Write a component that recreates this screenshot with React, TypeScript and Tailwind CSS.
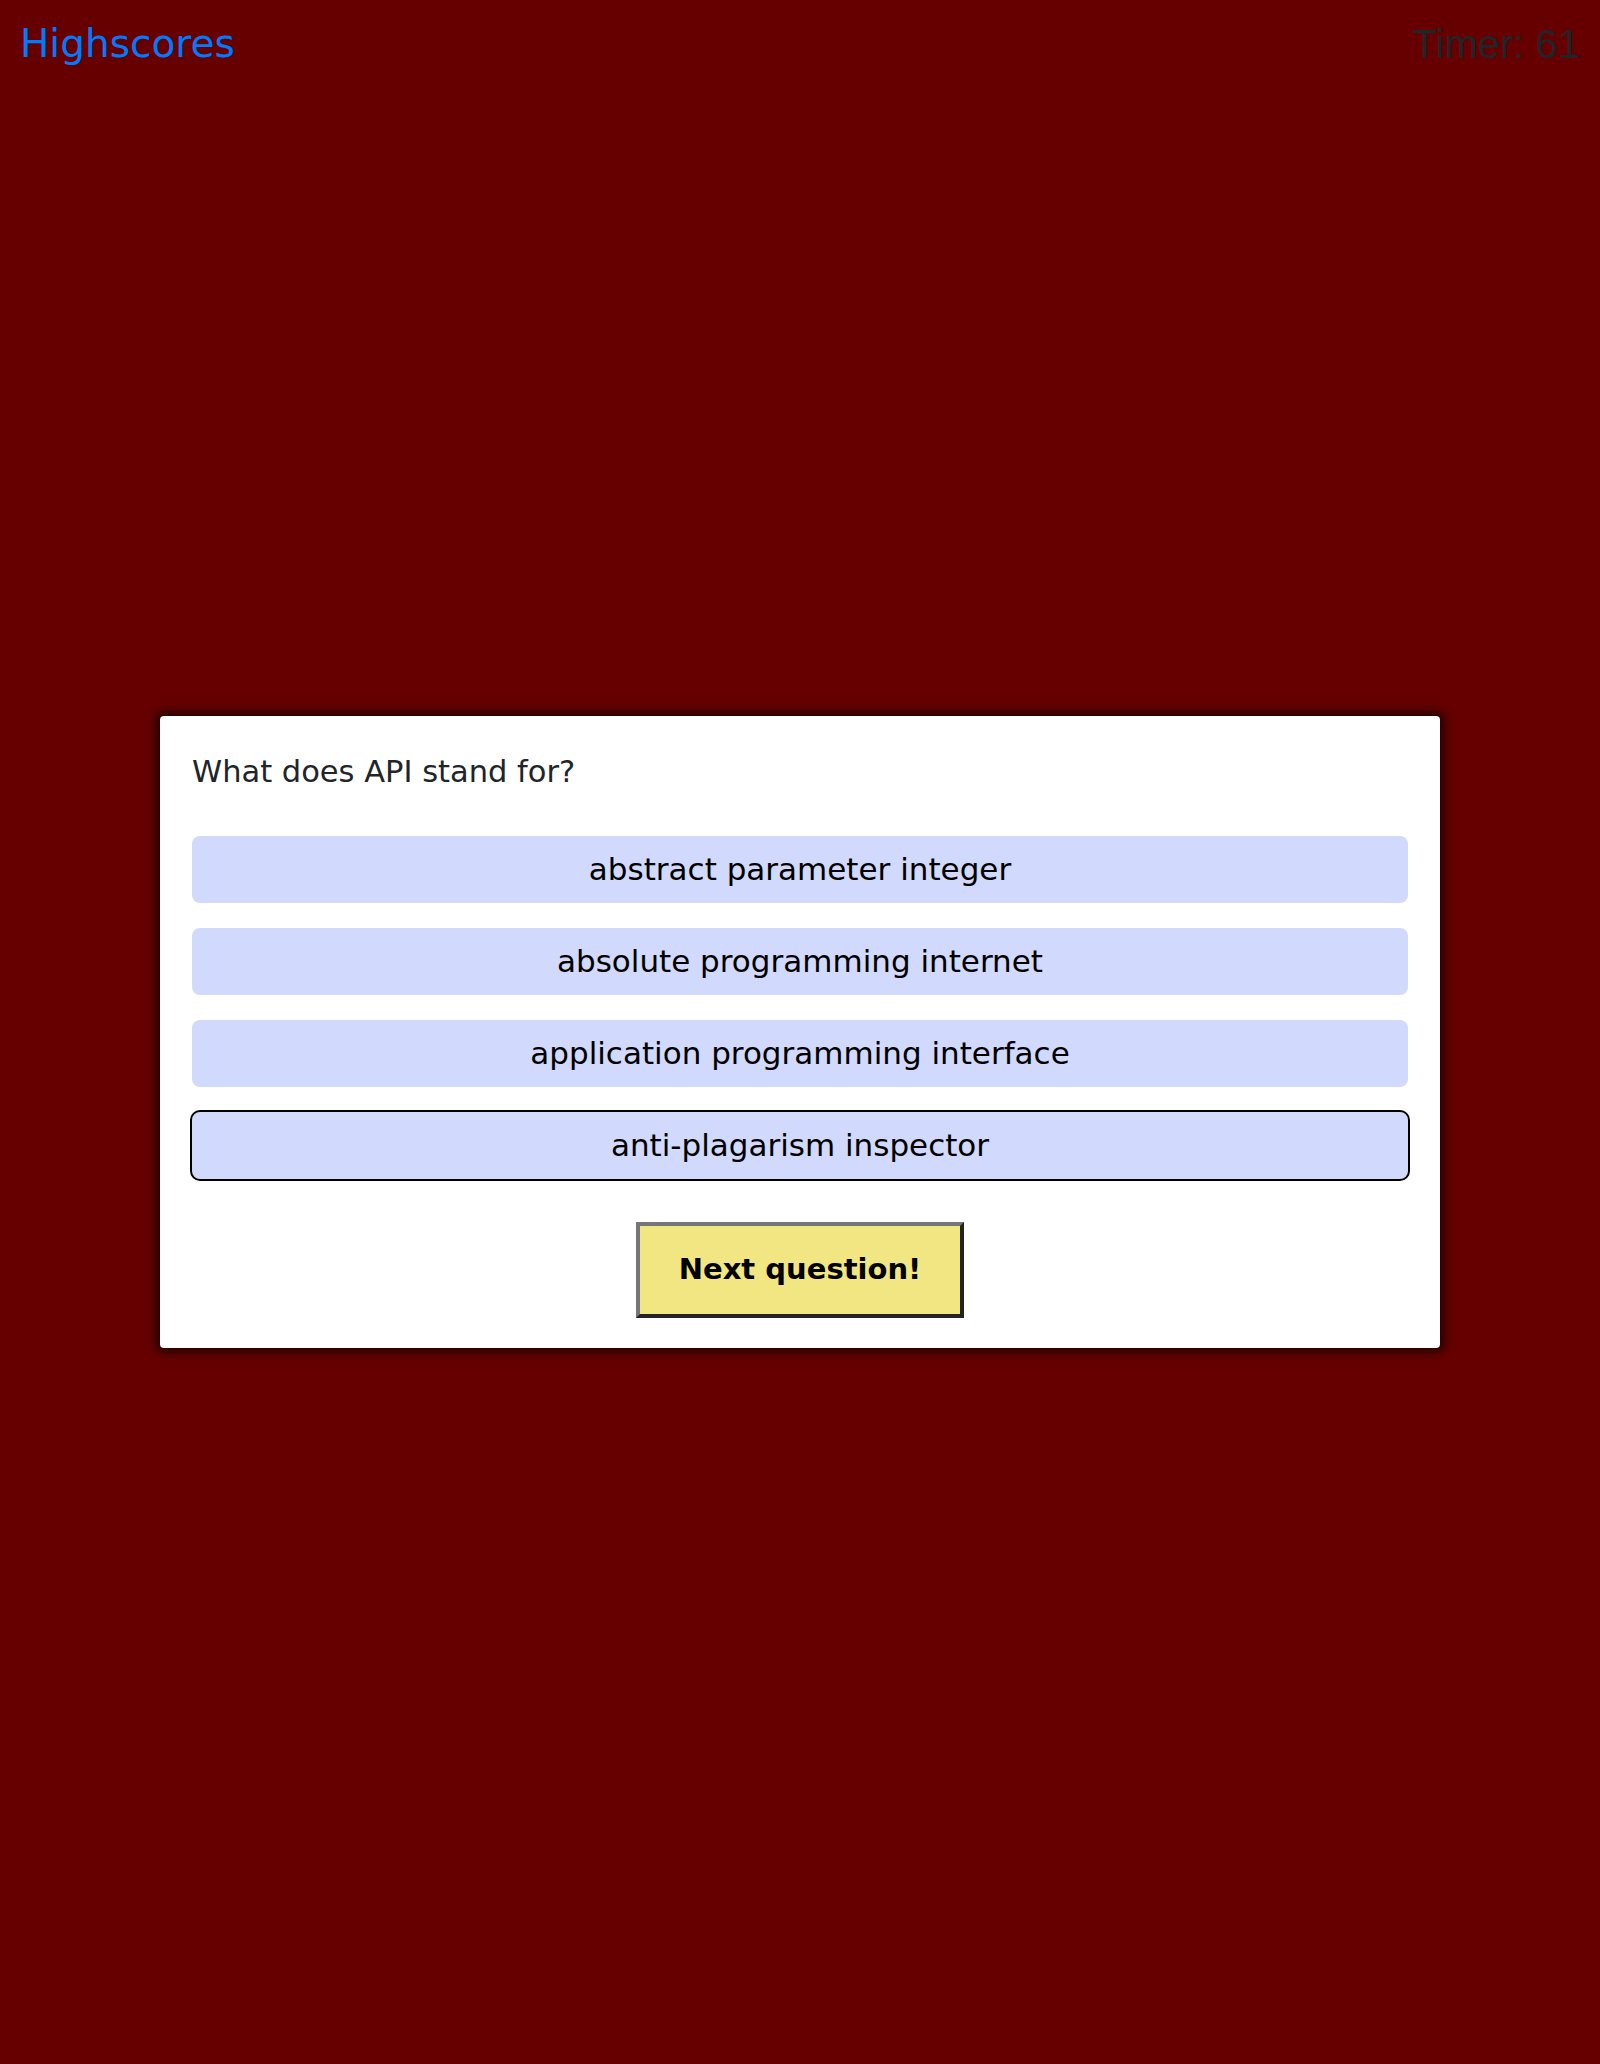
import React from "react";

const answers = [
  "abstract parameter integer",
  "absolute programming internet",
  "application programming interface",
  "anti-plagarism inspector",
];

export default function App() {
  const selected = 3;

  return (
    <div className="grid h-[2064px] grid-rows-[88px_1fr_88px] bg-[#660000]">
      {/* Top bar */}
      <div className="flex items-start justify-between px-[20px] pt-[14px]">
        <a
          href="#"
          className="text-[39px] leading-[60px] text-[#007bff] font-['DejaVu_Sans',sans-serif]"
        >
          Highscores
        </a>
        <span className="text-[40px] leading-[60px] text-[#212529] font-['Liberation_Sans',Arial,sans-serif]">
          Timer: 61
        </span>
      </div>

      {/* Quiz card */}
      <div className="flex items-center justify-center">
        <div className="w-[1280px] rounded-[4px] bg-white px-[32px] pt-[32px] pb-[30px] font-['DejaVu_Sans',sans-serif] shadow-[0_0_10px_5px_rgba(0,0,0,0.6)]">
          <p className="text-[30.5px] leading-[48px] text-[#212529]">What does API stand for?</p>

          <div className="mt-[40px] flex flex-col gap-[25px]">
            {answers.map((a, i) => (
              <button
                key={a}
                className={
                  "flex h-[67px] w-full items-center justify-center rounded-[8px] bg-[#d1d9fc] text-[31px] text-black" +
                  (i === selected ? " outline-2 outline-solid outline-offset-0 outline-black" : "")
                }
              >
                {a}
              </button>
            ))}
          </div>

          <div className="mt-[43px] flex justify-center">
            <button className="flex h-[96px] w-[328px] items-center justify-center border-4 border-t-[#767676] border-l-[#767676] border-r-[#232323] border-b-[#232323] bg-[#f2e682] text-[29px] font-bold text-black">
              Next question!
            </button>
          </div>
        </div>
      </div>

      <div />
    </div>
  );
}
